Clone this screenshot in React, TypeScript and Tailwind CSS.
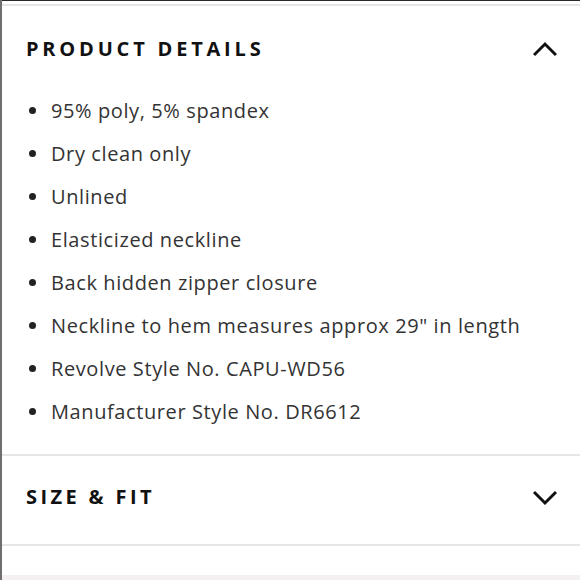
const details = [
  "95% poly, 5% spandex",
  "Dry clean only",
  "Unlined",
  "Elasticized neckline",
  "Back hidden zipper closure",
  'Neckline to hem measures approx 29" in length',
  "Revolve Style No. CAPU-WD56",
  "Manufacturer Style No. DR6612",
];

function Chevron({ up }: { up?: boolean }) {
  return (
    <svg className="h-[24px] w-[24px] text-[#111]" fill="none" stroke="currentColor" strokeWidth={3} viewBox="0 0 24 24">
      {up ? <path d="M1 18 12 7l11 11" /> : <path d="M1 7l11 11 11-11" />}
    </svg>
  );
}

export default function App() {
  return (
    <div className="flex h-[580px] w-[580px] flex-col border-l-2 border-[#6f6f6f] bg-white font-['Open_Sans',sans-serif]">
      {/* top rules */}
      <div className="h-px bg-[#2a2a2a]" />
      <div className="mt-[3px] h-[2px] bg-[#e6e6e6]" />

      {/* Product details */}
      <div className="flex h-[83px] items-center justify-between pl-[24px] pr-[23px] pt-[3px]">
        <h2 className="text-[20px] font-bold tracking-[0.19em] text-[#111]">PRODUCT DETAILS</h2>
        <Chevron up />
      </div>
      <ul className="flex flex-col pb-[21px] pl-[27px]">
        {details.map((d) => (
          <li className="flex h-[43px] items-center gap-[15px] text-[20px] tracking-[0.03em] text-[#333]" key={d}>
            <span className="h-[7px] w-[7px] shrink-0 rounded-full bg-[#222]" />
            {d}
          </li>
        ))}
      </ul>

      <div className="h-[2px] bg-[#e6e6e6]" />

      {/* Size & fit */}
      <div className="flex h-[88px] items-center justify-between pb-[6px] pl-[24px] pr-[23px]">
        <h2 className="text-[20px] font-bold tracking-[0.17em] text-[#111]">SIZE &amp; FIT</h2>
        <Chevron />
      </div>

      <div className="h-[2px] bg-[#e6e6e6]" />
      <div className="flex-1" />
      <div className="h-[5px] bg-[#f4eff0]" />
    </div>
  );
}
